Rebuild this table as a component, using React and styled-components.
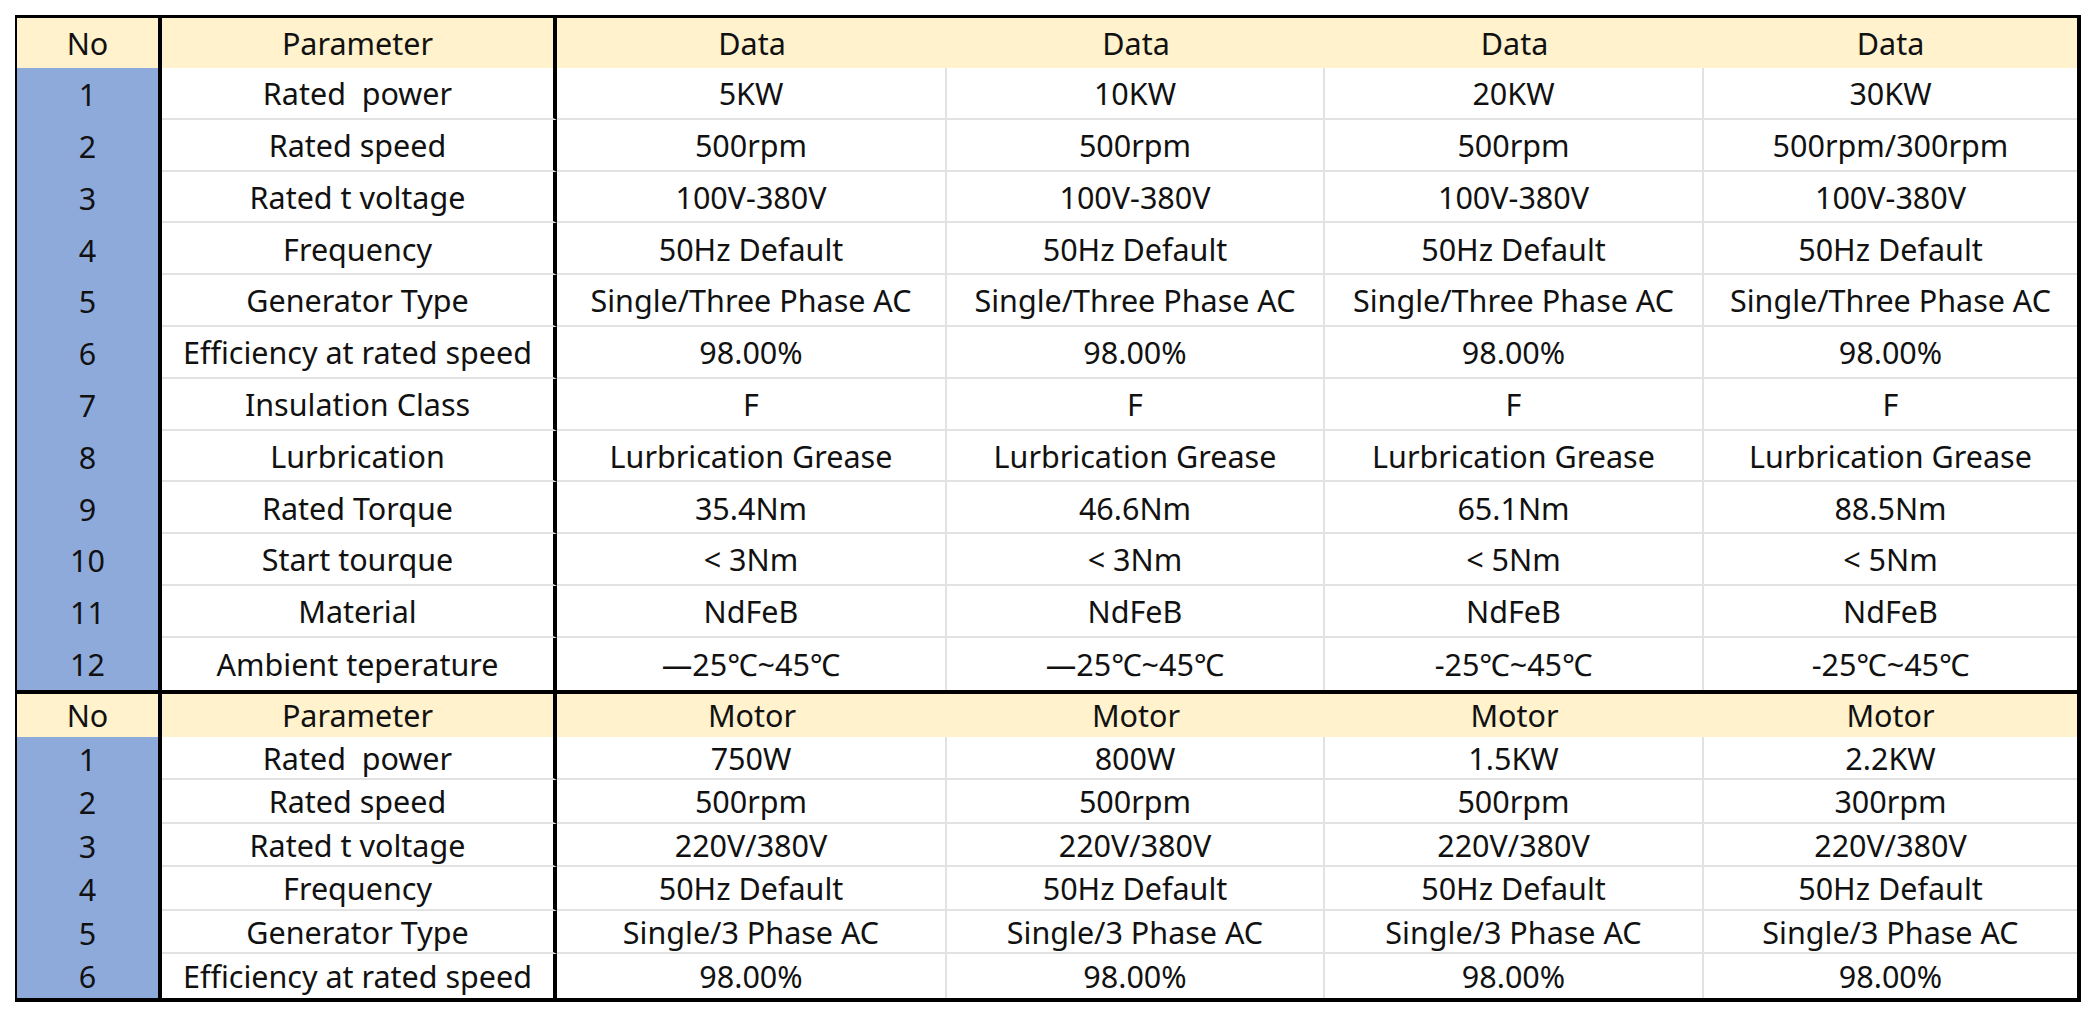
import React from "react";
import styled, { createGlobalStyle } from "styled-components";

const GlobalStyle = createGlobalStyle`
  html, body {
    margin: 0;
    padding: 0;
    background: #ffffff;
  }
  body {
    font-family: "Noto Sans", "Noto Sans CJK SC", sans-serif;
    color: #111111;
  }
`;

const Page = styled.div`
  padding: 15px 0 0 15px;
`;

const Table = styled.div`
  width: 2066px;
  border: 3px solid #000;
  border-left-width: 2px;
  border-right-width: 4px;
  border-bottom-width: 4px;
  box-sizing: border-box;
`;

const Section = styled.div`
  border-top: ${(p) => (p.$divider ? "4px solid #000" : "none")};
`;

const Row = styled.div`
  display: grid;
  grid-template-columns: 145px 395px 390px 378px 379px 1fr;
  height: ${(p) => p.$height}px;
  background: ${(p) => (p.$head ? "#fff2cc" : "#ffffff")};
`;

const Cell = styled.div`
  display: flex;
  align-items: center;
  justify-content: center;
  box-sizing: border-box;
  font-size: 30.5px;
  line-height: 1;
  white-space: pre;
  padding-top: 1px;
`;

const NoCell = styled(Cell)`
  background: ${(p) => (p.$head ? "#fff2cc" : "#8eaadb")};
  border-right: 4px solid #000;
`;

const ParamCell = styled(Cell)`
  border-right: 4px solid #000;
  border-bottom: ${(p) => (p.$line ? "2px solid #e2e2e2" : "none")};
`;

const DataCell = styled(Cell)`
  border-right: ${(p) => (p.$sep ? "2px solid #e2e2e2" : "none")};
  border-bottom: ${(p) => (p.$line ? "2px solid #e2e2e2" : "none")};
`;

const generator = [
  ["Rated  power", "5KW", "10KW", "20KW", "30KW"],
  ["Rated speed", "500rpm", "500rpm", "500rpm", "500rpm/300rpm"],
  ["Rated t voltage", "100V-380V", "100V-380V", "100V-380V", "100V-380V"],
  ["Frequency", "50Hz Default", "50Hz Default", "50Hz Default", "50Hz Default"],
  [
    "Generator Type",
    "Single/Three Phase AC",
    "Single/Three Phase AC",
    "Single/Three Phase AC",
    "Single/Three Phase AC",
  ],
  ["Efficiency at rated speed", "98.00%", "98.00%", "98.00%", "98.00%"],
  ["Insulation Class", "F", "F", "F", "F"],
  [
    "Lurbrication",
    "Lurbrication Grease",
    "Lurbrication Grease",
    "Lurbrication Grease",
    "Lurbrication Grease",
  ],
  ["Rated Torque", "35.4Nm", "46.6Nm", "65.1Nm", "88.5Nm"],
  ["Start tourque", "< 3Nm", "< 3Nm", "< 5Nm", "< 5Nm"],
  ["Material", "NdFeB", "NdFeB", "NdFeB", "NdFeB"],
  ["Ambient teperature", "—25℃~45℃", "—25℃~45℃", "-25℃~45℃", "-25℃~45℃"],
];

const motor = [
  ["Rated  power", "750W", "800W", "1.5KW", "2.2KW"],
  ["Rated speed", "500rpm", "500rpm", "500rpm", "300rpm"],
  ["Rated t voltage", "220V/380V", "220V/380V", "220V/380V", "220V/380V"],
  ["Frequency", "50Hz Default", "50Hz Default", "50Hz Default", "50Hz Default"],
  [
    "Generator Type",
    "Single/3 Phase AC",
    "Single/3 Phase AC",
    "Single/3 Phase AC",
    "Single/3 Phase AC",
  ],
  ["Efficiency at rated speed", "98.00%", "98.00%", "98.00%", "98.00%"],
];

function SpecSection({ title, rows, headHeight, rowHeight, divider }) {
  return (
    <Section $divider={divider}>
      <Row $head $height={headHeight}>
        <NoCell $head>No</NoCell>
        <ParamCell>Parameter</ParamCell>
        {[0, 1, 2, 3].map((i) => (
          <DataCell key={i}>{title}</DataCell>
        ))}
      </Row>
      {rows.map((r, idx) => {
        const line = idx < rows.length - 1;
        return (
          <Row key={idx} $height={rowHeight}>
            <NoCell>{idx + 1}</NoCell>
            <ParamCell $line={line}>{r[0]}</ParamCell>
            {r.slice(1).map((v, i) => (
              <DataCell key={i} $line={line} $sep={i < 3}>
                {v}
              </DataCell>
            ))}
          </Row>
        );
      })}
    </Section>
  );
}

export default function App() {
  return (
    <Page>
      <GlobalStyle />
      <Table>
        <SpecSection title="Data" rows={generator} headHeight={50} rowHeight={51.8} />
        <SpecSection title="Motor" rows={motor} headHeight={43} rowHeight={43.5} divider />
      </Table>
    </Page>
  );
}
